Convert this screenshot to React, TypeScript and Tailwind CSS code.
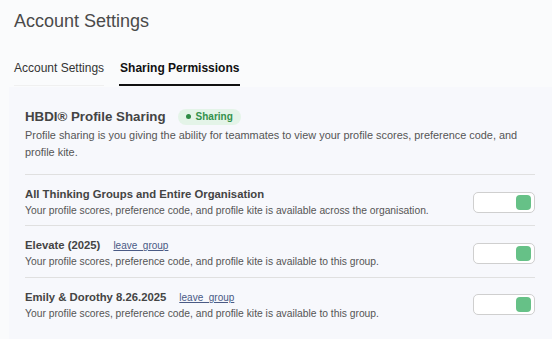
const groups = [
  {
    name: 'All Thinking Groups and Entire Organisation',
    desc: 'Your profile scores, preference code, and profile kite is available across the organisation.',
    leave: false,
  },
  {
    name: 'Elevate (2025)',
    desc: 'Your profile scores, preference code, and profile kite is available to this group.',
    leave: true,
  },
  {
    name: 'Emily & Dorothy 8.26.2025',
    desc: 'Your profile scores, preference code, and profile kite is available to this group.',
    leave: true,
  },
];

function Toggle() {
  return (
    <div className="flex h-[21px] w-[62px] shrink-0 items-center justify-end rounded-[5px] border border-[#cfcfcf] bg-white pr-[3px]">
      <div className="h-[15px] w-[15px] rounded-[4px] bg-[#66c187]" />
    </div>
  );
}

export default function App() {
  return (
    <div className="h-[339px] w-[552px] overflow-hidden bg-[#fafbfc] font-['Liberation_Sans',Arial,sans-serif] text-[#444]">
      <h1 className="px-[14px] pt-[10px] text-[18px] leading-[22px] text-[#4a4a4a]">Account Settings</h1>

      <div className="mt-[27px] flex px-[14px] text-[12px]">
        <div className="border-b border-[#f0f0f0] pb-[8px] text-[#333]">Account Settings</div>
        <div className="ml-[15px] border-b-2 border-[#111] px-[1px] pb-[7px] font-bold text-[#111]">
          Sharing Permissions
        </div>
      </div>

      <div className="ml-[9px] mt-[1px] bg-[#f7f8fc] pb-[30px] pl-[16px] pr-[17px] pt-[20px]">
        <div className="flex items-center gap-[12px]">
          <h2 className="text-[13.3px] font-bold text-[#444]">HBDI® Profile Sharing</h2>
          <span className="flex h-[16px] items-center gap-[5px] rounded-full bg-[#e4f4e8] px-[8px] text-[10px] font-bold text-[#34914c]">
            <span className="h-[5px] w-[5px] rounded-full bg-[#2e8b45]" />
            Sharing
          </span>
        </div>
        <p className="pr-[10px] text-[10.9px] leading-[17px] text-[#555]">
          Profile sharing is you giving the ability for teammates to view your profile scores, preference code, and
          profile kite.
        </p>

        <div className="mt-[13px] border-t border-[#e0e0e0]">
          {groups.map((g, i) => (
            <div
              key={g.name}
              className={`flex items-center justify-between pb-[7px] pt-[11px] ${i < groups.length - 1 ? 'border-b border-[#e0e0e0]' : ''}`}
            >
              <div>
                <div className="flex items-baseline gap-[13px]">
                  <span className="text-[11.3px] font-bold text-[#444]">{g.name}</span>
                  {g.leave && <a className="text-[10px] text-[#4a5a85] underline">leave_group</a>}
                </div>
                <div className="text-[10.3px] text-[#555]">{g.desc}</div>
              </div>
              <Toggle />
            </div>
          ))}
        </div>
      </div>
    </div>
  );
}
